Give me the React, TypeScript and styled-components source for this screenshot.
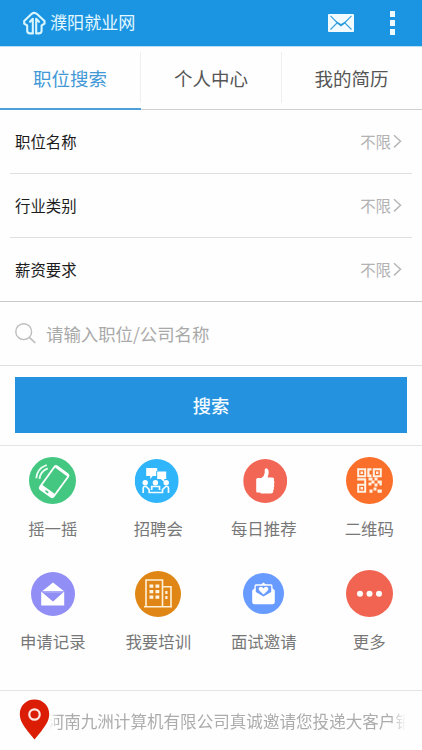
import React from 'react';
import styled, { createGlobalStyle } from 'styled-components';

const GlobalStyle = createGlobalStyle`
  * { box-sizing: border-box; }
  body {
    margin: 0;
    background: #fff;
    font-family: "Noto Sans CJK SC", "Noto Sans", sans-serif;
  }
  svg { display: block; flex: none; }
`;

const Page = styled.main`
  width: 422px;
  height: 750px;
  overflow: hidden;
  background: #fefefe;
`;

const Header = styled.header`
  display: flex;
  align-items: center;
  height: 47px;
  padding: 0 27px 1px 23px;
  background: #1b95e1;
  border-bottom: 1px solid #b9def5;
  color: #e4f8ff;
`;

const SiteName = styled.h1`
  flex: 1;
  margin: 0 0 1px 4px;
  font-size: 17.1px;
  line-height: 24px;
  font-weight: 400;
`;

const MenuDots = styled.div`
  display: grid;
  gap: 3px;
  margin-left: 36px;
  span {
    width: 5px;
    height: 6px;
    background: #eefaff;
  }
`;

const Tabs = styled.nav`
  display: grid;
  grid-template-columns: 141px 141px 140px;
  height: 63px;
`;

const Tab = styled.a<{ $active?: boolean }>`
  display: flex;
  align-items: center;
  justify-content: center;
  padding: 0 1px ${p => (p.$active ? 0 : 1)}px 0;
  font-size: 18.5px;
  color: ${p => (p.$active ? '#4198d6' : '#555')};
  border-bottom: ${p => (p.$active ? '2px solid #4c9fd8' : '1px solid #cfcfcf')};
  background: linear-gradient(#efefef, #efefef) right 5px / 1px 51px no-repeat;
  &:last-child { background: none; }
`;

const Filters = styled.section`
  padding: 0 10px;
  border-bottom: 1px solid #c9c9c9;
`;

const FilterRow = styled.div`
  display: flex;
  align-items: center;
  height: 64px;
  padding: 0 10px 1px 5px;
  font-size: 15.4px;
  color: #1c1c1c;
  border-bottom: 1px solid #dfdfdf;
  &:last-child { height: 63px; border-bottom: 0; }
`;

const FilterValue = styled.span`
  display: flex;
  align-items: center;
  gap: 2px;
  margin-left: auto;
  color: #b2b2b2;
`;

const SearchField = styled.div`
  display: flex;
  align-items: center;
  gap: 10px;
  height: 64px;
  padding: 0 15px;
  border-bottom: 1px solid #dedede;
  font-size: 17.4px;
  color: #a9a9a9;
`;

const SubmitArea = styled.div`
  height: 80px;
  padding: 11px 15px 12px;
  border-bottom: 1px solid #e4e4e4;
`;

const SubmitButton = styled.button`
  display: block;
  width: 392px;
  height: 56px;
  padding: 0 0 1px;
  border: 0;
  background: #2592e0;
  color: #f4fbff;
  font: 500 18.3px "Noto Sans CJK SC", sans-serif;
`;

const Shortcuts = styled.section`
  display: grid;
  grid-template-columns: repeat(4, 1fr);
  grid-auto-rows: 113px;
  height: 245px;
  padding-top: 11px;
  border-bottom: 1px solid #e3e3e3;
`;

const Shortcut = styled.a`
  display: flex;
  flex-direction: column;
  align-items: center;
  font-size: 16.4px;
  line-height: 24px;
  color: #777;
`;

const IconSlot = styled.div<{ $shift?: number }>`
  display: grid;
  place-items: center;
  height: 47px;
  margin-bottom: 12px;
  transform: translateX(${p => p.$shift ?? 0}px);
`;

const Notice = styled.footer`
  display: flex;
  align-items: center;
  height: 57px;
  padding-left: 19px;
`;

const Ticker = styled.div`
  display: flex;
  justify-content: flex-end;
  width: 357px;
  margin: 2px 0 0 -1px;
  overflow: hidden;
  white-space: nowrap;
  font-size: 16.57px;
  line-height: 26px;
  color: #acacac;
  mask-image: linear-gradient(90deg, transparent, #000 10px, #000 342px, transparent 357px);
  span { margin-right: -6px; }
`;

const Logo = () => (
  <svg width="23" height="24" viewBox="0 0 23 24" fill="none" stroke="#d9f6ff" strokeWidth="2.1" strokeLinejoin="round" strokeLinecap="round">
    <path d="M10 22.4H7Q4.2 22.4 4.2 19.5V14.5L1.2 12.7V10L8.5 3Q11.3.6 14 3L21.5 10V12.7L18.6 14.5V19.5Q18.6 22.4 15.8 22.4H13.2" />
    <path d="M9.8 21.5V7.8L7 10.8M13.2 21.5V7.8L16 10.8" />
  </svg>
);

const Mail = () => (
  <svg width="26" height="18" viewBox="0 0 26 18">
    <rect width="26" height="18" rx="1" fill="#f2fbff" />
    <path d="M2.5 1.8L9.5 9L13 11.8L16.5 9L23.5 1.8M9.5 8.5L2.5 15.5M16.5 8.5L23.5 15.5" fill="none" stroke="#3da2df" strokeWidth="1.15" />
    <path d="M7 6.5L13 10L19 6.5L16.5 9.5L13 12.2L9.5 9.5Z" fill="#2c99dd" />
  </svg>
);

const Chevron = () => (
  <svg width="9" height="15" viewBox="0 0 9 15" fill="none" stroke="#b7b7b7" strokeWidth="1.5">
    <path d="M1 1.2L7.5 7.3L1 13.4" />
  </svg>
);

const Magnifier = () => (
  <svg width="21" height="21" viewBox="0 0 21 21" fill="none" stroke="#bdbdbd" strokeWidth="1.4">
    <circle cx="8.7" cy="8.7" r="7.9" />
    <path d="M14.3 14.3L20.3 20" strokeWidth="1.7" />
  </svg>
);

const Disc = ({ size, color, children }: { size: number; color: string; children: React.ReactNode }) => (
  <svg width={size} height={size} viewBox={`${-size / 2} ${-size / 2} ${size} ${size}`}>
    <circle r={size / 2} fill={color} />
    {children}
  </svg>
);

const ShakeIcon = () => (
  <Disc size={47} color="#44c780">
    <g transform="translate(1.6 1.2) rotate(36)">
      <rect x="-9.3" y="-15" width="18.6" height="30" rx="3" fill="#fff" />
      <rect x="-7.5" y="-12" width="15" height="21.5" fill="#44c780" />
      <rect x="-1.8" y="11.4" width="3.6" height="1.8" rx=".9" fill="#44c780" />
    </g>
    <path d="M-16.2-2.2Q-15.5-12-5.8-15.5M-13-1.6Q-12.5-9-4.8-12.2" fill="none" stroke="#f0fff6" strokeWidth="1.8" />
  </Disc>
);

const MeetingIcon = () => (
  <Disc size={44} color="#30b5fa">
    <g fill="#fff">
      <path d="M-10.5-13H.5V-10H-.5V-5H-4L-6.5-2V-5H-10.5Z" />
      <path d="M.5-9.5H9.5V-2H7.5V1L4-2H.5Z" />
      <circle cx="-11.5" cy="1.8" r="2.7" />
      <circle cx="-1.3" cy="1.8" r="2.7" />
      <circle cx="9.5" cy="1.8" r="2.7" />
    </g>
    <path d="M-13.5 12V7Q-13.5 5.5-12 5.5H-10.5L-7.5 8.7V11.5H5.8V8.7L9 5.5H10.2Q11.8 5.5 11.8 7V12M-5 9V5.5H2.8V9" fill="none" stroke="#f2fbff" strokeWidth="1.7" />
  </Disc>
);

const ThumbIcon = () => (
  <Disc size={44} color="#f26655">
    <path d="M-9-1.5Q-9-3-7.5-3H-3.8Q-1-4.5-.5-8V-11.5Q1.3-14 3.2-11Q4.3-8 2.5-3.5H7Q9.4-3.3 8.8-1V0Q10 1.2 8.8 3Q9.7 5 8.5 6.5Q9.3 8.3 8 9.3Q8.5 12.5 5.5 12.5H-4L-5.5 11.5H-7.8Q-9 11.5-9 10Z" fill="#fff" />
  </Disc>
);

const QrIcon = () => (
  <Disc size={47} color="#fa702b">
    <g fill="none" stroke="#fff2e4" strokeWidth="2">
      <path d="M-11.3-11.3H-4.3V-4.3H-11.3ZM4.3-11.3H11.3V-4.3H4.3ZM-11.3 4.3H-4.3V11.3H-11.3Z" />
    </g>
    <path d="M-9-9h2.5v2.5h-2.5zM6.5-9h2.5v2.5H6.5zM-9 6.5h2.5V9h-2.5zM-2.2-12.3H2V-10H0V-6H2V-3.5H-2.2ZM-12.3-2.2H-3.3V4.3H-5.3V0H-12.3ZM-1-3H3V0H-1ZM2 0H5V3H2ZM5-3H8V0H5ZM8 0H12.3V5H10V3H8ZM-1 2H2V5H-1ZM5 3H8V6H5ZM0 9H3V12.3H0ZM4 7H7V10H4ZM8 9H12.3V12.3H8Z" fill="#fff2e4" />
  </Disc>
);

const ApplyIcon = () => (
  <Disc size={44} color="#918ff5">
    <path d="M-10.8-2.8L0-11.5L11-2.8Z" fill="#fff" />
    <path d="M-11.8-2.5L0 7.5L11.2-2.5V11.5H-11.8Z" fill="#fff" />
    <path d="M-9.3-1.8H9L0 6Z" fill="#fff" />
    <path d="M-10-1.8H9.5L0 7.2Z" fill="#918ff5" />
  </Disc>
);

const TrainingIcon = () => (
  <Disc size={46} color="#df8616">
    <g fill="none" stroke="#fff1d8" strokeWidth="1.6">
      <path d="M-12 12V-14H4.5V12M4.5-7.2H13V12M-14 12.8H14" />
    </g>
    <path d="M-8.5-9.5h3.8v3.2h-3.8zM-2.5-9.5h3.8v3.2h-3.8zM-8.5-4h3.8v3.2h-3.8zM-2.5-4h3.8v3.2h-3.8zM-8.5 1.5h3.8v3.2h-3.8zM-2.5 1.5h3.8v3.2h-3.8zM7.3-3h2.2v3H7.3zM7.3 2h2.2v3H7.3z" fill="#fff4e3" />
  </Disc>
);

const InviteIcon = () => (
  <Disc size={41} color="#689bff">
    <path d="M-11.3-3L-9-5.3V-7.8Q-9-9.3-7.5-9.3H-2.2L0-11L2.2-9.3H7.5Q9-9.3 9-7.8V-5.3L11.3-3V8.5Q11.3 10.7 9 10.7H-9Q-11.3 10.7-11.3 8.5Z" fill="#fff" />
    <path d="M-7.7-7.7H7.7V-1.5L0 3L-7.7-1.5Z" fill="#689bff" />
    <path d="M0 1L-4-2.7Q-6-5.3-3.5-6.5Q-1.2-7.3 0-5Q1.2-7.3 3.5-6.5Q6-5.3 4-2.7Z" fill="#fff" />
  </Disc>
);

const MoreIcon = () => (
  <Disc size={47} color="#f16451">
    <g fill="#fff">
      <circle cx="-9.5" cy=".3" r="3" />
      <circle cy=".3" r="3" />
      <circle cx="9.5" cy=".3" r="3" />
    </g>
  </Disc>
);

const Pin = () => (
  <svg width="31" height="41" viewBox="0 0 31 41">
    <path d="M15.5.5C7 .5.8 6.8.8 15C.8 22 5 27 8.5 32L15.5 40.5L22.5 32C26 27 30.2 22 30.2 15C30.2 6.8 24 .5 15.5.5Z" fill="#db1d05" />
    <circle cx="15.5" cy="15.5" r="5.2" fill="none" stroke="#ffe8e3" strokeWidth="2.2" />
  </svg>
);

const filters = ['职位名称', '行业类别', '薪资要求'];

const shortcuts = [
  { label: '摇一摇', icon: <ShakeIcon /> },
  { label: '招聘会', icon: <MeetingIcon />, shift: -1.3 },
  { label: '每日推荐', icon: <ThumbIcon />, shift: 1.2 },
  { label: '二维码', icon: <QrIcon /> },
  { label: '申请记录', icon: <ApplyIcon /> },
  { label: '我要培训', icon: <TrainingIcon /> },
  { label: '面试邀请', icon: <InviteIcon /> },
  { label: '更多', icon: <MoreIcon /> },
];

export default function App() {
  return (
    <Page>
      <GlobalStyle />
      <Header>
        <Logo />
        <SiteName>濮阳就业网</SiteName>
        <Mail />
        <MenuDots><span /><span /><span /></MenuDots>
      </Header>
      <Tabs>
        <Tab $active>职位搜索</Tab>
        <Tab>个人中心</Tab>
        <Tab>我的简历</Tab>
      </Tabs>
      <Filters>
        {filters.map(name => (
          <FilterRow key={name}>
            {name}
            <FilterValue>不限<Chevron /></FilterValue>
          </FilterRow>
        ))}
      </Filters>
      <SearchField>
        <Magnifier />
        请输入职位/公司名称
      </SearchField>
      <SubmitArea>
        <SubmitButton>搜索</SubmitButton>
      </SubmitArea>
      <Shortcuts>
        {shortcuts.map(s => (
          <Shortcut key={s.label}>
            <IconSlot $shift={s.shift}>{s.icon}</IconSlot>
            {s.label}
          </Shortcut>
        ))}
      </Shortcuts>
      <Notice>
        <Pin />
        <Ticker><span>河南九洲计算机有限公司真诚邀请您投递大客户销</span></Ticker>
      </Notice>
    </Page>
  );
}
